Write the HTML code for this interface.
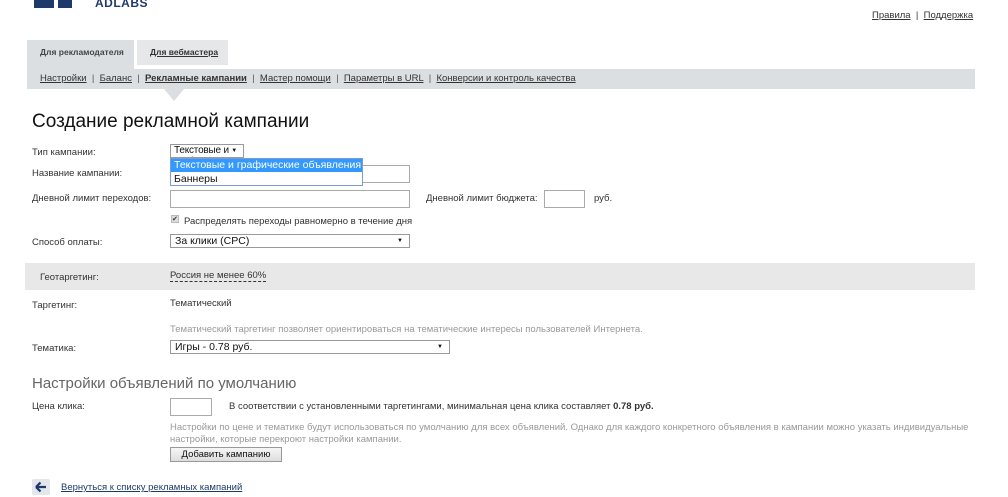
<!DOCTYPE html>
<html><head><meta charset="utf-8"><style>
*{margin:0;padding:0;box-sizing:border-box}
body{width:1008px;height:497px;overflow:hidden;background:#fff;font-family:"Liberation Sans",sans-serif;font-size:10px;color:#333;position:relative}
.a{position:absolute;white-space:nowrap}
a{color:#333;text-decoration:underline}
.lbl{font-size:9.5px;color:#333}
.inp{position:absolute;border:1px solid #aaa;background:#fff}
.sel{position:absolute;border:1px solid #999;background:#fff;font-size:11px;padding:1px 4px;color:#111}
.sel:after{content:"▼";position:absolute;right:6px;top:3px;font-size:6px;background:#fff}
.gray{color:#999;font-size:9.5px}
</style></head><body>
<div class="a" style="left:34px;top:0;width:20px;height:8px;background:#1e3a6a"></div>
<div class="a" style="left:58px;top:0;width:14px;height:8px;background:#1e3a6a"></div>
<div class="a" style="left:95px;top:-4px;font-size:12px;font-weight:bold;color:#1e3a6a;letter-spacing:0.5px">ADLABS</div>
<div class="a" style="left:872px;top:10px;font-size:9.5px"><a href="#">Правила</a> &nbsp;|&nbsp; <a href="#">Поддержка</a></div>

<div class="a" style="left:27px;top:40px;width:107px;height:29px;background:#dcdfe2"></div>
<div class="a" style="left:40px;top:47px;font-size:8.5px;font-weight:bold;color:#444">Для рекламодателя</div>
<div class="a" style="left:137px;top:40px;width:91px;height:25px;background:#e6e7e8"></div>
<div class="a" style="left:150px;top:47px;font-size:8.5px;font-weight:bold"><a href="#">Для вебмастера</a></div>
<div class="a" style="left:27px;top:69px;width:948px;height:20px;background:#dcdfe2"></div>
<div class="a" style="left:164px;top:89px;width:0;height:0;border-left:10px solid transparent;border-right:10px solid transparent;border-top:12px solid #dcdfe2"></div>
<div class="a" style="left:40px;top:73px;font-size:9.5px;color:#555">
<a href="#">Настройки</a> &nbsp;|&nbsp; <a href="#">Баланс</a> &nbsp;|&nbsp; <a href="#" style="font-weight:bold">Рекламные кампании</a> &nbsp;|&nbsp; <a href="#">Мастер помощи</a> &nbsp;|&nbsp; <a href="#">Параметры в URL</a> &nbsp;|&nbsp; <a href="#">Конверсии и контроль качества</a></div>

<div class="a" style="left:32px;top:111px;font-size:19px;color:#111">Создание рекламной кампании</div>

<div class="a lbl" style="left:32px;top:147px">Тип кампании:</div>
<div class="sel" style="left:170px;top:144px;width:74px;height:14px;font-size:10px;padding:0 3px;overflow:hidden;letter-spacing:-0.2px">Текстовые и графич</div>
<div class="a lbl" style="left:32px;top:168px">Название кампании:</div>
<div class="inp" style="left:170px;top:165px;width:240px;height:18px"></div>
<div class="a" style="left:170px;top:158px;width:193px;height:28px;border:1px solid #7a9cd3;background:#fff;z-index:2;overflow:hidden">
<div style="background:#3399ff;color:#fff;font-size:10.5px;height:13px;line-height:13px;padding-left:3px;overflow:hidden;white-space:nowrap">Текстовые и графические объявления</div>
<div style="font-size:10.5px;height:13px;line-height:14px;padding-left:3px;color:#111">Баннеры</div></div>

<div class="a lbl" style="left:32px;top:193px">Дневной лимит переходов:</div>
<div class="inp" style="left:170px;top:190px;width:240px;height:18px"></div>
<div class="a lbl" style="left:426px;top:193px">Дневной лимит бюджета:</div>
<div class="inp" style="left:544px;top:190px;width:41px;height:18px"></div>
<div class="a lbl" style="left:594px;top:193px">руб.</div>

<div class="a" style="left:171px;top:215px;width:8px;height:8px;background:#ddd;border:1px solid #bbb;font-size:7px;line-height:7px">✔</div>
<div class="a lbl" style="left:184px;top:216px">Распределять переходы равномерно в течение дня</div>

<div class="a lbl" style="left:32px;top:237px">Способ оплаты:</div>
<div class="sel" style="left:170px;top:234px;width:240px;height:14px;font-size:10.5px;padding:0 4px">За клики (CPC)</div>

<div class="a" style="left:25px;top:263px;width:950px;height:27px;background:#e8e8e8"></div>
<div class="a lbl" style="left:40px;top:272px">Геотаргетинг:</div>
<div class="a lbl" style="left:170px;top:270px;border-bottom:1px dashed #333">Россия не менее 60%</div>

<div class="a lbl" style="left:32px;top:300px">Таргетинг:</div>
<div class="a lbl" style="left:170px;top:298px">Тематический</div>
<div class="a gray" style="left:170px;top:324px">Тематический таргетинг позволяет ориентироваться на тематические интересы пользователей Интернета.</div>
<div class="a lbl" style="left:32px;top:343px">Тематика:</div>
<div class="sel" style="left:170px;top:340px;width:280px;height:14px;font-size:10.5px;padding:0 4px">Игры - 0.78 руб.</div>

<div class="a" style="left:32px;top:375px;font-size:15px;color:#666">Настройки объявлений по умолчанию</div>
<div class="a lbl" style="left:32px;top:401px">Цена клика:</div>
<div class="inp" style="left:170px;top:398px;width:42px;height:18px"></div>
<div class="a lbl" style="left:229px;top:401px">В соответствии с установленными таргетингами, минимальная цена клика составляет <b>0.78 руб.</b></div>
<div class="a gray" style="left:170px;top:422px;line-height:12px">Настройки по цене и тематике будут использоваться по умолчанию для всех объявлений. Однако для каждого конкретного объявления в кампании можно указать индивидуальные<br>настройки, которые перекроют настройки кампании.</div>
<div class="a" style="left:170px;top:447px;width:112px;height:15px;border:1px solid #999;background:linear-gradient(#f6f6f6,#ddd);font-size:9.5px;text-align:center;line-height:13px;color:#111">Добавить кампанию</div>

<div class="a" style="left:32px;top:479px;width:18px;height:16px;background:#e3e6ea;border-radius:2px"></div>
<svg class="a" style="left:35px;top:481px" width="12" height="12" viewBox="0 0 12 12"><path d="M1 6H11M1 6L5.5 1.5M1 6L5.5 10.5" stroke="#1e3a6a" stroke-width="2.2" fill="none"/></svg>
<div class="a lbl" style="left:61px;top:482px"><a href="#" style="color:#1e3a6a">Вернуться к списку рекламных кампаний</a></div>
</body></html>
